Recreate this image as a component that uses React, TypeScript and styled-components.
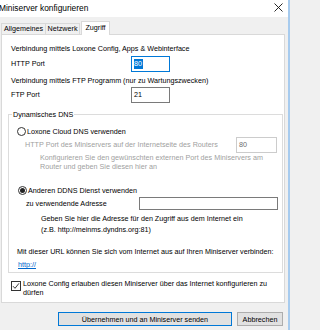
import React from "react";
import styled, { createGlobalStyle, css } from "styled-components";

const Global = createGlobalStyle`
    html, body {
        margin: 0;
        padding: 0;
        background: #f0f0f0;
    }
    body {
        font-family: "Liberation Sans", Arial, sans-serif;
        font-size: 7.2px;
        color: #000;
    }
`;

const CloseIcon = () => (
    <svg width="9" height="9" viewBox="0 0 9 9">
        <path d="M0.5 0.5 L8.5 8.5 M8.5 0.5 L0.5 8.5" stroke="#111" strokeWidth="0.9" />
    </svg>
);

const App = () => {
    return (
        <>
            <Global />
            <Window>
                <TitleBar>
                    <Title>Miniserver konfigurieren</Title>
                    <Close>
                        <CloseIcon />
                    </Close>
                </TitleBar>

                <Body>
                    <TabRow>
                        <Tab $w={45}>Allgemeines</Tab>
                        <Tab $w={35}>Netzwerk</Tab>
                        <Tab $w={29} $active>
                            Zugriff
                        </Tab>
                    </TabRow>

                    <Panel>
                        <Heading $top={9}>Verbindung mittels Loxone Config, Apps &amp; Webinterface</Heading>
                        <FieldRow $top={3}>
                            <FieldLabel>HTTP Port</FieldLabel>
                            <Input $focused>
                                <Selected>80</Selected>
                            </Input>
                        </FieldRow>

                        <Heading $top={5}>Verbindung mittels FTP Programm (nur zu Wartungszwecken)</Heading>
                        <FieldRow $top={2}>
                            <FieldLabel>FTP Port</FieldLabel>
                            <Input>21</Input>
                        </FieldRow>

                        <Group>
                            <Legend>Dynamisches DNS</Legend>

                            <RadioRow $top={8} $indent={8}>
                                <Radio />
                                <span>Loxone Cloud DNS verwenden</span>
                            </RadioRow>

                            <DisabledRow>
                                <span>HTTP Port des Miniservers auf der Internetseite des Routers</span>
                                <Input $disabled $w={41}>
                                    80
                                </Input>
                            </DisabledRow>

                            <Note $indent={31} $line={9} $disabled>
                                Konfigurieren Sie den gewünschten externen Port des Miniservers am
                                <br />
                                Router und geben Sie diesen hier an
                            </Note>

                            <RadioRow $top={15} $indent={9}>
                                <Radio $checked />
                                <span>Anderen DDNS Dienst verwenden</span>
                            </RadioRow>

                            <AddressRow>
                                <span>zu verwendende Adresse</span>
                                <Input $w={139} $h={13} />
                            </AddressRow>

                            <Note $indent={32} $line={11} $top={3}>
                                Geben Sie hier die Adresse für den Zugriff aus dem Internet ein
                                <br />
                                (z.B. http://meinms.dyndns.org:81)
                            </Note>

                            <Note $indent={8} $line={9} $top={12}>
                                Mit dieser URL können Sie sich vom Internet aus auf Ihren Miniserver verbinden:
                            </Note>

                            <Link href="#">http://</Link>
                        </Group>

                        <CheckRow>
                            <Checkbox>
                                <svg width="8" height="8" viewBox="0 0 8 8">
                                    <path d="M1 4.2 L3 6.3 L7 1.3" fill="none" stroke="#222" strokeWidth="0.9" />
                                </svg>
                            </Checkbox>
                            <CheckText>
                                Loxone Config erlauben diesen Miniserver über das Internet konfigurieren zu
                                <br />
                                dürfen
                            </CheckText>
                        </CheckRow>
                    </Panel>

                    <ButtonRow>
                        <Button $w={174} $default>
                            Übernehmen und an Miniserver senden
                        </Button>
                        <Button $w={46}>Abbrechen</Button>
                    </ButtonRow>
                </Body>
            </Window>
        </>
    );
};

export default App;

const Window = styled.div`
    width: 290px;
    height: 330px;
    box-sizing: border-box;
    border-right: 2px solid #a7cbee;
    background: #f0f0f0;
    display: flex;
    flex-direction: column;
    overflow: hidden;
`;

const TitleBar = styled.div`
    height: 17px;
    flex: none;
    background: #fff;
    display: flex;
    align-items: center;
    justify-content: space-between;
    padding-right: 5px;
`;

const Title = styled.div`
    margin-left: -1px;
    font-size: 8.4px;
    line-height: 17px;
`;

const Close = styled.div`
    display: flex;
    margin-top: -2px;
`;

const Body = styled.div`
    display: flex;
    flex-direction: column;
    padding: 5px 0 0 1px;
`;

const TabRow = styled.div`
    display: flex;
    align-items: flex-end;
    height: 12px;
    position: relative;
    z-index: 1;
`;

const Tab = styled.div<{ $w: number; $active?: boolean }>`
    width: ${(p) => p.$w}px;
    height: 11px;
    box-sizing: border-box;
    border: 1px solid #d9d9d9;
    border-bottom: none;
    margin-right: -1px;
    background: #f0f0f0;
    line-height: 10px;
    text-align: center;
    white-space: nowrap;
    ${(p) =>
        p.$active &&
        css`
            height: 14px;
            margin: 0 0 -1px 2px;
            background: #fff;
            line-height: 11px;
        `}
`;

const Panel = styled.div`
    width: 284px;
    height: 269px;
    box-sizing: border-box;
    border: 1px solid #d9d9d9;
    background: #fff;
    display: flex;
    flex-direction: column;
`;

const Heading = styled.div<{ $top: number }>`
    margin: ${(p) => p.$top}px 0 0 9px;
    line-height: 9px;
    height: 9px;
    white-space: nowrap;
`;

const FieldRow = styled.div<{ $top: number }>`
    display: flex;
    align-items: center;
    margin: ${(p) => p.$top}px 0 0 9px;
    height: 15px;
`;

const FieldLabel = styled.div`
    width: 120px;
`;

const Input = styled.div<{ $focused?: boolean; $disabled?: boolean; $w?: number; $h?: number }>`
    width: ${(p) => p.$w ?? 39}px;
    height: ${(p) => p.$h ?? 16}px;
    box-sizing: border-box;
    border: 1px solid ${(p) => (p.$focused ? "#0078d7" : p.$disabled ? "#cccccc" : "#7a7a7a")};
    background: #fff;
    color: ${(p) => (p.$disabled ? "#6d6d6d" : "#000")};
    display: flex;
    align-items: center;
    padding-left: 2px;
    flex: none;
`;

const Selected = styled.span`
    background: #0078d7;
    color: #fff;
    line-height: 10px;
    padding-right: 1px;
`;

const Group = styled.fieldset`
    margin: 8px 1px 0 6px;
    padding: 0 0 3px 0;
    border: 1px solid #dcdcdc;
    min-width: 0;
    display: flex;
    flex-direction: column;
`;

const Legend = styled.legend`
    margin-left: 3px;
    padding: 0 1px;
    line-height: 9px;
`;

const RadioRow = styled.div<{ $top: number; $indent: number }>`
    display: flex;
    align-items: center;
    gap: 1px;
    height: 9px;
    margin: ${(p) => p.$top}px 0 0 ${(p) => p.$indent}px;
`;

const Radio = styled.span<{ $checked?: boolean }>`
    width: 9px;
    height: 9px;
    box-sizing: border-box;
    border-radius: 50%;
    border: 1px solid #333;
    background: #fff;
    display: flex;
    align-items: center;
    justify-content: center;
    &::after {
        content: "";
        width: 5px;
        height: 5px;
        border-radius: 50%;
        background: ${(p) => (p.$checked ? "#222" : "transparent")};
    }
`;

const DisabledRow = styled.div`
    display: flex;
    align-items: center;
    justify-content: space-between;
    height: 15px;
    margin: 1px 5px 0 16px;
    color: #a0a0a0;
    white-space: nowrap;
`;

const Note = styled.div<{ $indent: number; $line: number; $top?: number; $disabled?: boolean }>`
    margin: ${(p) => p.$top ?? 1}px 0 0 ${(p) => p.$indent}px;
    line-height: ${(p) => p.$line}px;
    color: ${(p) => (p.$disabled ? "#a0a0a0" : "#000")};
    white-space: nowrap;
`;

const AddressRow = styled.div`
    display: flex;
    align-items: center;
    justify-content: space-between;
    height: 13px;
    margin: 2px 4px 0 17px;
`;

const Link = styled.a`
    margin: 4px 0 0 9px;
    line-height: 9px;
    color: #0066cc;
    text-decoration: underline;
    align-self: flex-start;
`;

const CheckRow = styled.div`
    display: flex;
    align-items: flex-start;
    gap: 2px;
    margin: 6px 0 0 9px;
`;

const Checkbox = styled.span`
    width: 10px;
    height: 10px;
    box-sizing: border-box;
    border: 1px solid #333;
    background: #fff;
    display: flex;
    align-items: center;
    justify-content: center;
    margin-top: 2px;
    flex: none;
`;

const CheckText = styled.div`
    line-height: 9px;
    white-space: nowrap;
`;

const ButtonRow = styled.div`
    display: flex;
    justify-content: flex-end;
    gap: 5px;
    padding-right: 5px;
    margin-top: 9px;
`;

const Button = styled.div<{ $w: number; $default?: boolean }>`
    width: ${(p) => p.$w}px;
    height: 14px;
    box-sizing: border-box;
    border: 1px solid ${(p) => (p.$default ? "#0078d7" : "#adadad")};
    background: #e1e1e1;
    display: flex;
    align-items: center;
    justify-content: center;
`;
